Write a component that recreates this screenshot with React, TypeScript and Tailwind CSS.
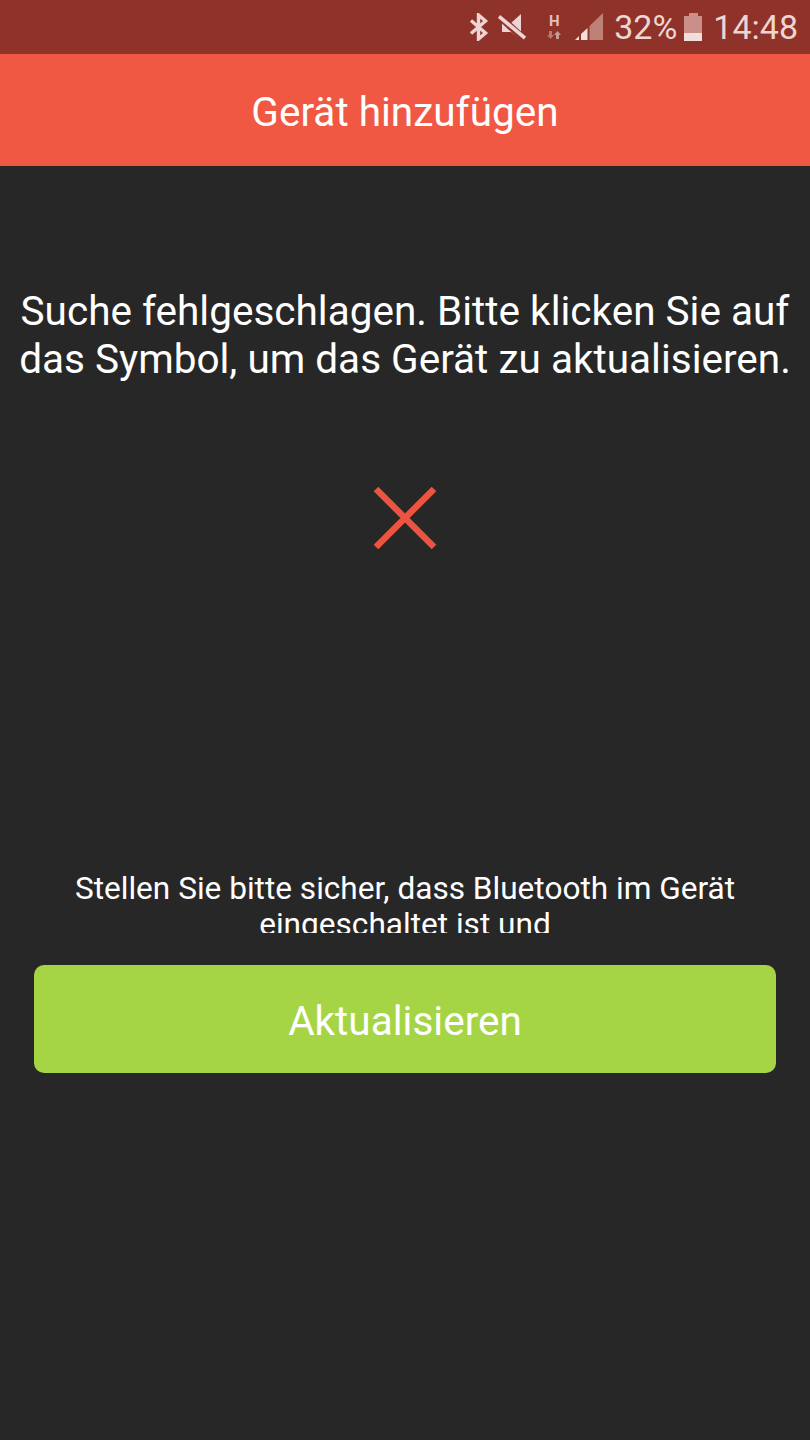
const font = "font-['Roboto',sans-serif]";

function StatusIcons() {
  return (
    <div className="flex items-center">
      {/* bluetooth */}
      <svg width="20" height="28" viewBox="0 0 20 28" className="ml-[20px]" fill="none" stroke="#ecd5d2" strokeWidth="3.4">
        <path d="M2 7.5 L16.5 20 L9.5 26 V2 L16.5 8 L2 20.5" />
      </svg>
      {/* muted speaker */}
      <svg width="28" height="28" viewBox="0 0 28 28" className="ml-[9px]">
        <path d="M23 1 V27 L13 19 H4 V10 H13 Z" fill="#ecd5d2" />
        <path d="M1 3 L26 26" stroke="#8f3229" strokeWidth="7" />
        <path d="M1 3.5 L27 25" stroke="#ecd5d2" strokeWidth="3.6" />
      </svg>
      {/* H network type with data arrows */}
      <div className="ml-[19px] flex w-[18px] flex-col items-center">
        <span className="text-[15px] leading-[14px] font-bold text-[#e3bfba]">H</span>
        <svg width="16" height="9" viewBox="0 0 16 9" className="mt-[3px]">
          <path d="M3 0 H6 V4 H8 L4.5 8 L1 4 H3 Z" fill="#b77a72" />
          <path d="M10 8 H13 V4 H15 L11.5 0 L8 4 H10 Z" fill="#c99a93" />
        </svg>
      </div>
      {/* signal strength: two lit bars, two dimmed */}
      <svg width="28" height="28" viewBox="0 0 28 28" className="ml-[12px]">
        <path d="M14.5 13 L28 0 V27 H14.5 Z" fill="#bd8178" />
        <path d="M0 27 L4 23 V27 Z" fill="#f1dfdc" />
        <path d="M6 21 L12.5 15 V27 H6 Z" fill="#f1dfdc" />
      </svg>
    </div>
  );
}

function Battery() {
  return (
    <div className="ml-[7px] flex w-[18px] flex-col items-center">
      <div className="h-[3px] w-[9px] bg-[#c98f88]" />
      <div className="flex h-[25px] w-[18px] flex-col justify-end bg-[#c98f88]">
        <div className="h-[8px] bg-[#f1dfdc]" />
      </div>
    </div>
  );
}

export default function App() {
  return (
    <div className={`flex h-[1440px] w-[810px] flex-col overflow-hidden bg-[#272727] text-white ${font}`}>
      <div className="flex h-[54px] items-center justify-end bg-[#8f3229] pr-[12px] text-[34px] text-[#ecd5d2]">
        <StatusIcons />
        <span className="ml-[11px] leading-[54px]">32%</span>
        <Battery />
        <span className="ml-[11px] leading-[54px]">14:48</span>
      </div>

      <header className="flex h-[112px] items-center justify-center bg-[#f15843] pt-[5px] text-[40.5px]">
        Gerät hinzufügen
      </header>

      <main className="flex flex-1 flex-col items-center">
        <p className="mt-[121px] text-center text-[40.5px] leading-[48px] whitespace-nowrap">
          Suche fehlgeschlagen. Bitte klicken Sie auf
          <br />
          das Symbol, um das Gerät zu aktualisieren.
        </p>

        <svg width="64" height="64" viewBox="0 0 64 64" className="mt-[103px]" stroke="#ec5340" strokeWidth="6.5">
          <path d="M3 3 L61 61 M61 3 L3 61" />
        </svg>

        <div className="mt-[321px] h-[62px] w-[700px] overflow-hidden text-center text-[31.6px] leading-[36px]">
          Stellen Sie bitte sicher, dass Bluetooth im Gerät eingeschaltet ist und
        </div>

        <button className="mt-[32px] h-[108px] w-[742px] rounded-[10px] bg-[#a5d545] pt-[5px] text-[40.5px] text-white">
          Aktualisieren
        </button>
      </main>
    </div>
  );
}
